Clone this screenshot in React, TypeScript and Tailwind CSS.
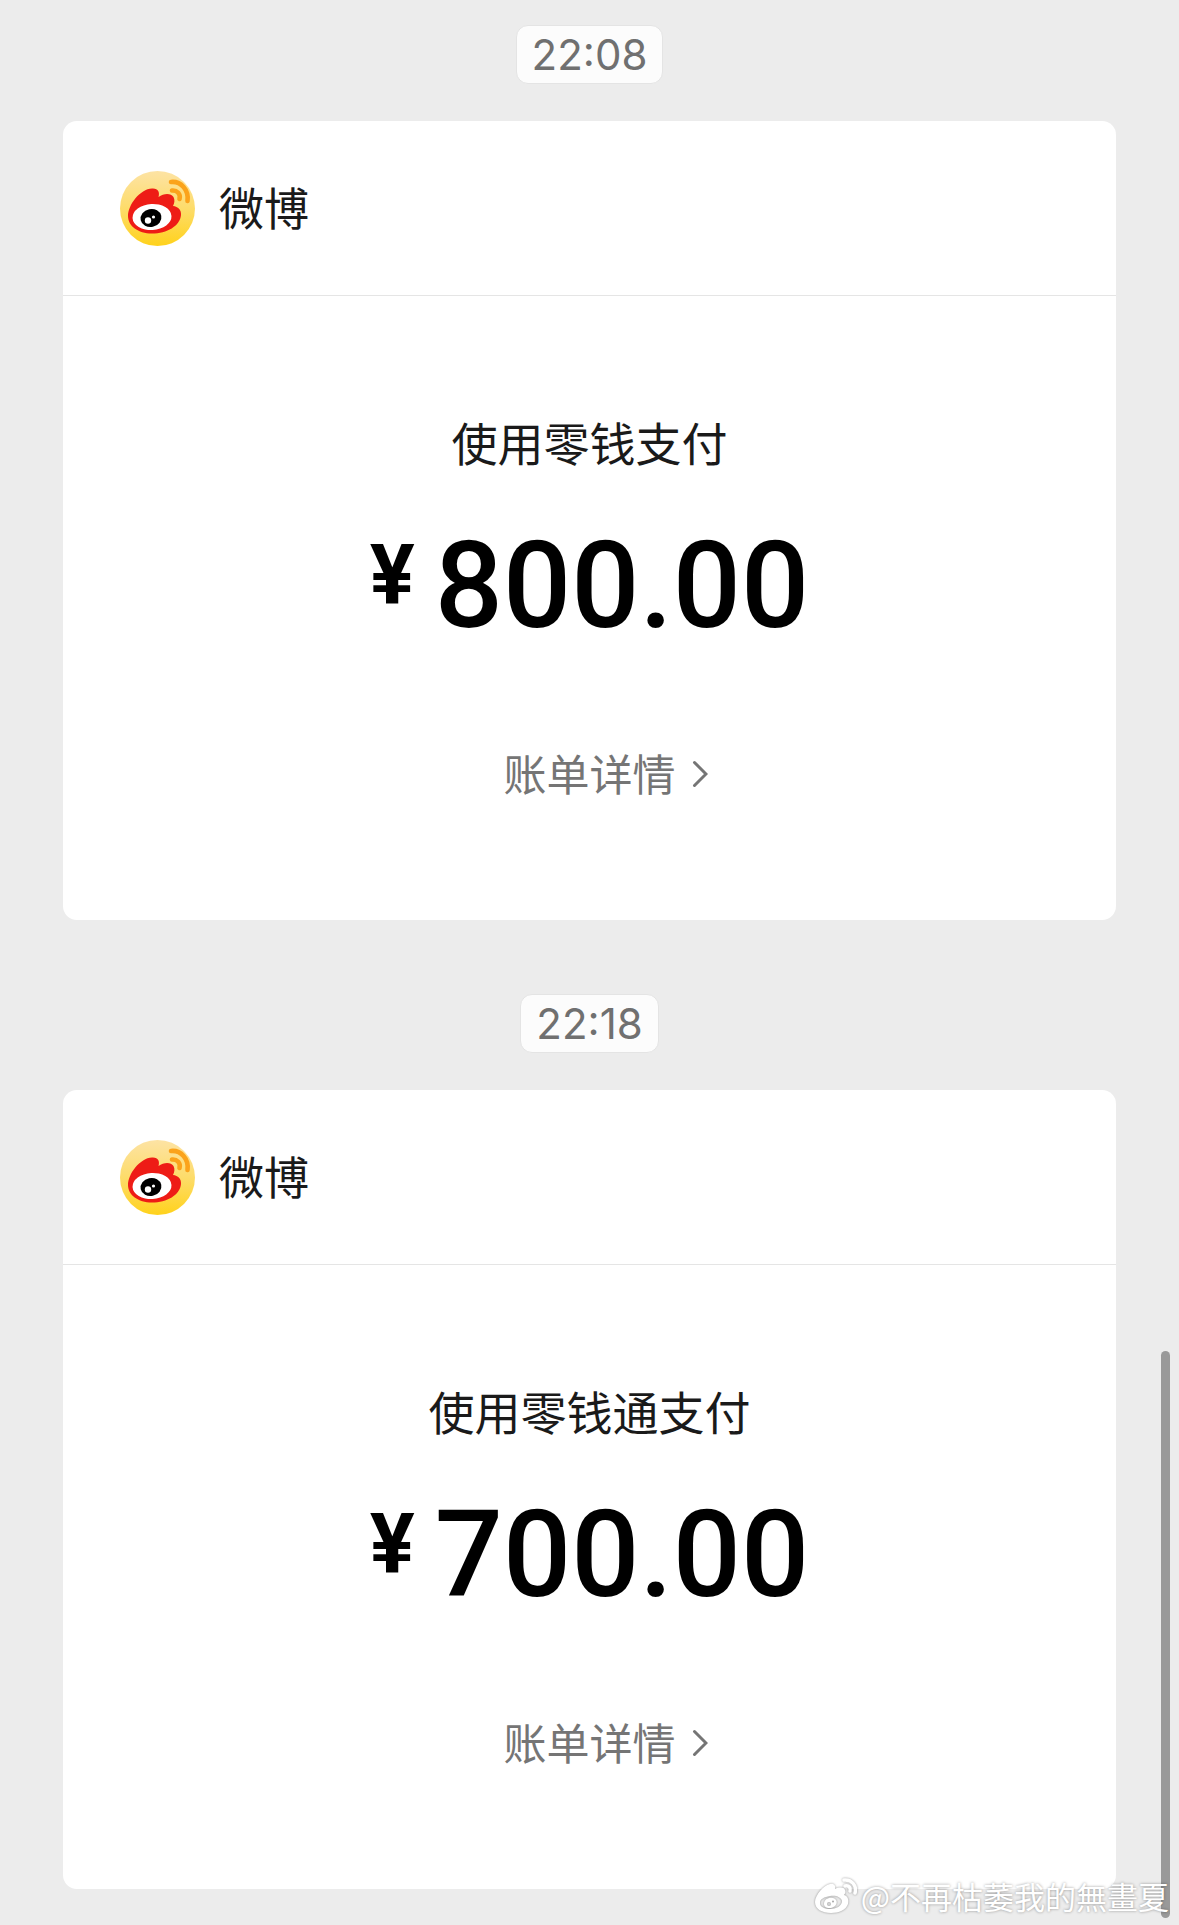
import React from "react";

type Payment = {
  time: string;
  method: string;
  amount: string;
};

const payments: Payment[] = [
  { time: "22:08", method: "使用零钱支付", amount: "800.00" },
  { time: "22:18", method: "使用零钱通支付", amount: "700.00" },
];

function WeiboLogo({ id }: { id: string }) {
  return (
    <svg className="size-[75px] shrink-0" viewBox="0 0 75 75" aria-hidden="true">
      <defs>
        <linearGradient id={id} x1="0" y1="0" x2="0" y2="1">
          <stop offset="0" stopColor="#fde3a4" />
          <stop offset="0.5" stopColor="#fddc6a" />
          <stop offset="1" stopColor="#ffd21c" />
        </linearGradient>
      </defs>
      <circle cx="37.5" cy="37.5" r="37.5" fill={`url(#${id})`} />
      <path
        d="M8 45C8 34 20 18 32 17.500C38 17 40 21 38.500 26C44 22 51 22 53.500 26C55 29 54.500 32 53 35C58 35.500 61.500 39 61 44C60 55 47 62.500 32 62.500C18 62.500 8 55 8 45Z"
        fill="#ee1c16"
      />
      <ellipse cx="32" cy="46" rx="19.500" ry="13" fill="#fff" transform="rotate(-3 32 46)" />
      <ellipse cx="31" cy="47" rx="10.500" ry="9" fill="#000" transform="rotate(-12 31 47)" />
      <circle cx="28" cy="49.500" r="3.200" fill="#fff" />
      <circle cx="33.500" cy="46" r="1.600" fill="#fff" />
      <g fill="none" stroke="#fba31b" strokeWidth="4.600" strokeLinecap="round">
        <path d="M51 11C61 10 69 19 67.500 30" />
        <path d="M52 19.500C57 19 61 23 59.500 28" />
      </g>
    </svg>
  );
}

function TimeBadge({ time }: { time: string }) {
  return (
    <time className="rounded-xl border border-[#e4e4e4] bg-[#fcfcfc] px-[15px] font-[Inter,sans-serif] text-[42px] leading-[57px] text-[#707070]">
      {time}
    </time>
  );
}

function PaymentCard({ payment }: { payment: Payment }) {
  return (
    <article className="w-full rounded-[14px] bg-white">
      <header className="flex h-[175px] items-center gap-6 border-b border-[#e5e5e5] px-[57px]">
        <WeiboLogo id={`logo-${payment.amount}`} />
        <h2 className="pb-0.5 text-[45px] leading-[64px] text-[#1a1a1a]">微博</h2>
      </header>
      <div className="flex flex-col items-center pt-[113px] pb-[118px]">
        <p className="text-[46px] leading-[64px] text-[#1a1a1a]">{payment.method}</p>
        <p className="mt-[53px] flex items-start gap-5 font-[Roboto,sans-serif] font-medium text-black">
          <span className="pt-2 text-[84px] leading-none font-bold">¥</span>
          <span className="text-[120px] leading-none">{payment.amount}</span>
        </p>
        <a href="#bill" className="mt-24 flex items-center gap-4 pl-8 text-[43px] leading-[60px] text-[#757575]">
          账单详情
          <svg className="h-8 w-4" viewBox="0 0 16 32" fill="none" stroke="currentColor" strokeWidth="3" strokeLinecap="round" aria-hidden="true">
            <path d="M2.500 6.500L14 18L2.500 29.500" />
          </svg>
        </a>
      </div>
    </article>
  );
}

function Watermark() {
  return (
    <div className="absolute right-[10px] bottom-1.5 flex items-center gap-1 text-[31px] leading-[46px] text-white [text-shadow:0_0_3px_rgba(0,0,0,0.4)]">
      <svg className="h-9 w-[42px] drop-shadow-[0_0_1px_rgba(0,0,0,0.4)]" viewBox="0 0 42 36" aria-hidden="true">
        <path
          fill="#fff"
          fillRule="evenodd"
          d="M0 24C0 17 9 7 15 6C19 5 21 8 20 11C24 9 29 9 30 12C31 14 30 16 29 17C33 18 34 22 33 26C31 32 24 35 16 35C7 35 0 31 0 24ZM5 25C5 29 10 31 15 31C21 31 27 28 27 23C26 19 21 17 15 18C9 19 5 21 5 25Z"
        />
        <path
          fill="#fff"
          fillRule="evenodd"
          d="M9 26C9 21 14 19 18 20C22 21 23 25 20 28C17 31 9 31 9 26ZM12 26a2 2 0 1 0 4 0a2 2 0 1 0 -4 0ZM17 23.500a1 1 0 1 0 2 0a1 1 0 1 0 -2 0Z"
        />
        <g fill="none" stroke="#fff" strokeWidth="3.500" strokeLinecap="round">
          <path d="M29 2C37 1 42 8 40 15" />
          <path d="M30 8C34 7 36 10 35 13" />
        </g>
      </svg>
      <span>@不再枯萎我的無畫夏</span>
    </div>
  );
}

function App() {
  return (
    <main className="relative flex min-h-screen flex-col gap-[74px] bg-[#ececec] px-[63px] pt-[25px] pb-9 font-['Noto_Sans_CJK_SC',sans-serif]">
      {payments.map((payment) => (
        <section key={payment.time} className="flex flex-col items-center gap-[37px]">
          <TimeBadge time={payment.time} />
          <PaymentCard payment={payment} />
        </section>
      ))}
      <div className="absolute right-[9px] bottom-[7px] h-[567px] w-[9px] rounded-full bg-[#999]" />
      <Watermark />
    </main>
  );
}
export default App;
